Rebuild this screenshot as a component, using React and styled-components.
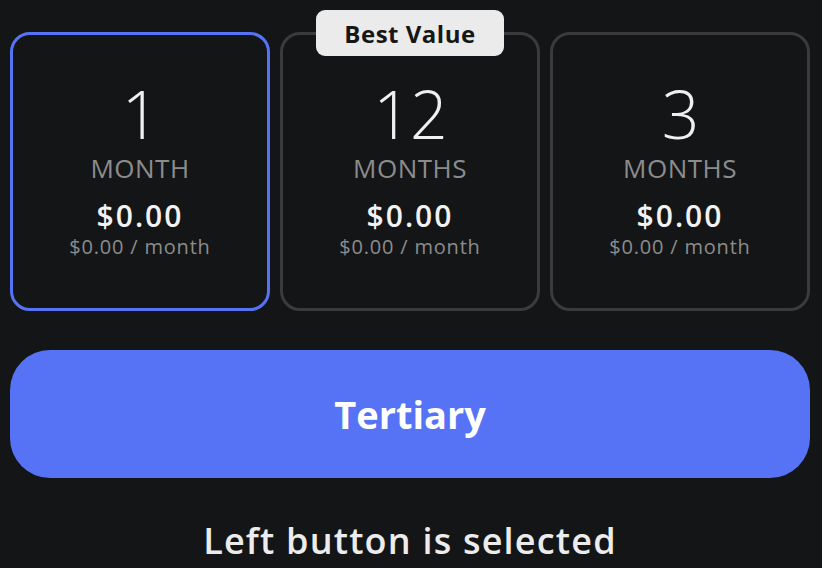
import React, { useState } from "react";
import styled, { createGlobalStyle } from "styled-components";

const GlobalStyle = createGlobalStyle`
  html, body {
    margin: 0;
    padding: 0;
    background: #141517;
    font-family: "Open Sans", "Noto Sans", sans-serif;
  }
`;

const Page = styled.div`
  width: 800px;
  margin-left: 10px;
  padding-top: 10px;
  display: flex;
  flex-direction: column;
`;

const Plans = styled.div`
  display: grid;
  grid-template-columns: repeat(3, 1fr);
  gap: 10px;
`;

const PlanWrap = styled.div`
  position: relative;
  padding-top: 22px;
`;

const Badge = styled.div`
  position: absolute;
  top: 0;
  left: 50%;
  transform: translateX(-50%);
  width: 188px;
  height: 46px;
  box-sizing: border-box;
  background: #ebebeb;
  border-radius: 9px;
  display: flex;
  align-items: center;
  justify-content: center;
  font-size: 24px;
  font-weight: 700;
  letter-spacing: 0.5px;
  color: #161616;
`;

const Card = styled.button`
  width: 100%;
  height: 279px;
  box-sizing: border-box;
  background: #141517;
  border: 3px solid ${p => (p.selected ? "#5773f5" : "#3a3b3d")};
  border-radius: 20px;
  display: flex;
  flex-direction: column;
  align-items: center;
  padding: 48px 0 0;
  cursor: pointer;
  font-family: inherit;
`;

const Count = styled.div`
  font-size: 66px;
  font-weight: 300;
  line-height: 60px;
  letter-spacing: -1px;
  color: #f0f0f0;
`;

const Unit = styled.div`
  margin-top: 10px;
  font-size: 26px;
  font-weight: 400;
  line-height: 30px;
  letter-spacing: 0.5px;
  color: #8c8c8c;
`;

const Price = styled.div`
  margin-top: 16px;
  font-size: 30px;
  font-weight: 600;
  line-height: 34px;
  letter-spacing: 2px;
  color: #f2f2f2;
`;

const PerMonth = styled.div`
  margin-top: 2px;
  font-size: 20px;
  line-height: 24px;
  letter-spacing: 0.8px;
  color: #8c8c8c;
`;

const ActionButton = styled.button`
  margin-top: 39px;
  height: 128px;
  width: 100%;
  border: none;
  border-radius: 40px;
  background: #5773f5;
  color: #ffffff;
  font-family: inherit;
  font-size: 38px;
  font-weight: 700;
  cursor: pointer;
`;

const Status = styled.div`
  margin-top: 38px;
  text-align: center;
  font-size: 36px;
  font-weight: 600;
  letter-spacing: 1.2px;
  color: #ececec;
`;

const plans = [
  { id: "left", count: "1", unit: "MONTH" },
  { id: "middle", count: "12", unit: "MONTHS", badge: "Best Value" },
  { id: "right", count: "3", unit: "MONTHS" }
];

export default function App() {
  const [selected, setSelected] = useState("left");

  const label = selected.charAt(0).toUpperCase() + selected.slice(1);

  return (
    <>
      <GlobalStyle />
      <Page>
        <Plans>
          {plans.map(plan => (
            <PlanWrap key={plan.id}>
              {plan.badge && <Badge>{plan.badge}</Badge>}
              <Card
                selected={selected === plan.id}
                onClick={() => setSelected(plan.id)}
              >
                <Count>{plan.count}</Count>
                <Unit>{plan.unit}</Unit>
                <Price>$0.00</Price>
                <PerMonth>$0.00 / month</PerMonth>
              </Card>
            </PlanWrap>
          ))}
        </Plans>
        <ActionButton>Tertiary</ActionButton>
        <Status>{label} button is selected</Status>
      </Page>
    </>
  );
}
